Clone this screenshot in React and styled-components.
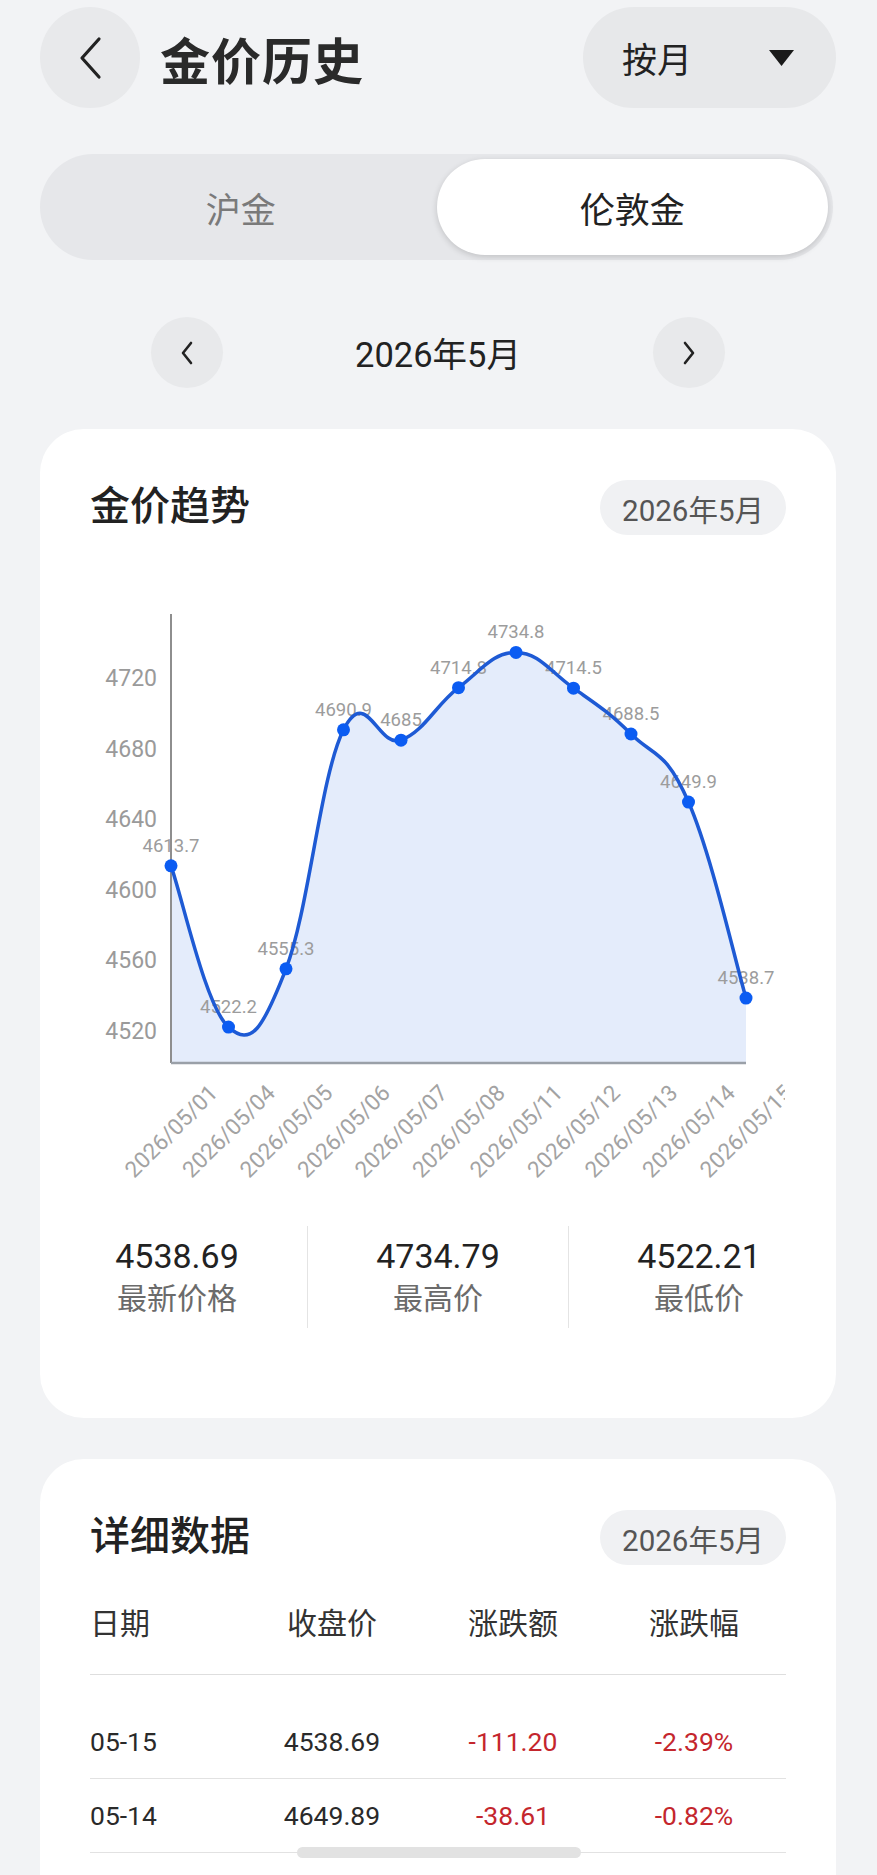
import React from 'react';
import styled, { createGlobalStyle } from 'styled-components';

const GlobalStyle = createGlobalStyle`
  html, body { margin: 0; padding: 0; background: #f2f3f5; }
  body {
    font-family: Roboto, "Noto Sans CJK SC", sans-serif;
    color: #222;
    -webkit-font-smoothing: antialiased;
  }
`;

const Page = styled.div`
  display: flex;
  flex-direction: column;
  padding: 7px 41px 160px 40px;
`;

const Header = styled.header`
  display: flex;
  align-items: center;
  height: 101px;
`;

const BackButton = styled.div`
  width: 100px;
  height: 101px;
  border-radius: 50%;
  background: #e8e9eb;
  display: flex;
  align-items: center;
  justify-content: center;
  flex-shrink: 0;
`;

const Title = styled.h1`
  margin: 0 0 0 20px;
  font-size: 50px;
  font-weight: 700;
  color: #2a2a2a;
  flex: 1;
  letter-spacing: 1px;
`;

const Dropdown = styled.div`
  width: 253px;
  height: 101px;
  box-sizing: border-box;
  border-radius: 51px;
  background: #e7e8ea;
  display: flex;
  align-items: center;
  justify-content: space-between;
  padding: 0 42px 0 39px;
  font-size: 35px;
  color: #222;
`;

const Segmented = styled.div`
  margin: 46px 3px 0 0;
  height: 106px;
  box-sizing: border-box;
  padding: 5px;
  border-radius: 53px;
  background: #e6e7ea;
  display: flex;
`;

const Segment = styled.div`
  flex: 1;
  border-radius: 48px;
  display: flex;
  align-items: center;
  justify-content: center;
  font-size: 35px;
  color: ${(p) => (p.$active ? '#222' : '#7a7a7a')};
  background: ${(p) => (p.$active ? '#fff' : 'transparent')};
  box-shadow: ${(p) => (p.$active ? '0 2px 6px rgba(0,0,0,0.16)' : 'none')};
`;

const MonthNav = styled.div`
  margin-top: 57px;
  display: flex;
  align-items: center;
  justify-content: center;
`;

const NavCircle = styled.div`
  width: 72px;
  height: 71px;
  border-radius: 50%;
  background: #e8e9eb;
  display: flex;
  align-items: center;
  justify-content: center;
`;

const MonthLabel = styled.div`
  width: 430px;
  text-align: center;
  font-size: 34.5px;
  color: #222;
  margin-bottom: 2px;
`;

const Card = styled.section`
  margin-top: 41px;
  background: #fff;
  border-radius: 44px;
  padding: 51px 50px ${(p) => p.$pb}px 50px;
  display: flex;
  flex-direction: column;
`;

const CardHeader = styled.div`
  display: flex;
  align-items: center;
  justify-content: space-between;
  height: 55px;
`;

const CardTitle = styled.h2`
  margin: 0 0 9px 0;
  font-size: 40px;
  font-weight: 500;
  color: #222;
`;

const Badge = styled.div`
  height: 55px;
  padding: 0 22px;
  border-radius: 28px;
  background: #f0f1f3;
  display: flex;
  align-items: center;
  font-size: 29.5px;
  color: #555;
`;

const ChartSvg = styled.svg`
  display: block;
  margin-top: 26px;
  overflow: hidden;
`;

const Stats = styled.div`
  margin: 45px -43px 0 -43px;
  display: flex;
  height: 102px;
`;

const StatItem = styled.div`
  flex: 1;
  display: flex;
  flex-direction: column;
  align-items: center;
  justify-content: center;
  border-left: ${(p) => (p.$first ? 'none' : '1px solid #e4e4e4')};
`;

const StatValue = styled.div`
  font-size: 34px;
  line-height: 40px;
  color: #222;
`;

const StatLabel = styled.div`
  margin-top: 3px;
  font-size: 30px;
  line-height: 40px;
  color: #6b6b6b;
`;

const cols = '151px 182px 180px 182px';

const TableHead = styled.div`
  margin-top: 39px;
  display: grid;
  grid-template-columns: ${cols};
  padding-bottom: 30px;
  border-bottom: 1.5px solid #dedede;
  font-size: 30px;
  line-height: 40px;
  color: #333;
`;

const TableBody = styled.div`
  margin-top: 30px;
`;

const Row = styled.div`
  display: grid;
  grid-template-columns: ${cols};
  height: 73px;
  align-items: center;
  border-bottom: 1.5px solid #e2e2e2;
  font-size: 26.5px;
  color: #2a2a2a;
`;

const Cell = styled.div`
  text-align: ${(p) => (p.$left ? 'left' : 'center')};
  color: ${(p) => (p.$tone === 'down' ? '#c4262d' : p.$tone === 'up' ? '#1f9d55' : 'inherit')};
`;

const HomeIndicator = styled.div`
  position: fixed;
  bottom: 17px;
  left: 50%;
  transform: translateX(-50%);
  width: 284px;
  height: 11px;
  border-radius: 6px;
  background: #e2e2e2;
`;

const values = [4613.7, 4522.2, 4555.3, 4690.9, 4685, 4714.8, 4734.8, 4714.5, 4688.5, 4649.9, 4538.7];
const dates = ['01', '04', '05', '06', '07', '08', '11', '12', '13', '14', '15'].map((d) => `2026/05/${d}`);
const yTicks = [4520, 4560, 4600, 4640, 4680, 4720];

const X0 = 81;
const STEP = 57.5;
const AXIS_BOTTOM = 502;
const px = (i) => X0 + i * STEP;
const py = (v) => 470 - (v - 4520) * 1.7625;

function buildPath(pts) {
  const a = 0.2;
  const n = pts.length;
  let d = `M${pts[0][0]},${pts[0][1]}`;
  for (let i = 0; i < n - 1; i++) {
    const p = pts[i];
    const q = pts[i + 1];
    let c1;
    if (i === 0) c1 = [p[0] + (q[0] - p[0]) * a, p[1] + (q[1] - p[1]) * a];
    else c1 = [p[0] + (q[0] - pts[i - 1][0]) * a, p[1] + (q[1] - pts[i - 1][1]) * a];
    let c2;
    if (i + 1 === n - 1) c2 = [q[0] - (q[0] - p[0]) * a, q[1] - (q[1] - p[1]) * a];
    else c2 = [q[0] - (pts[i + 2][0] - p[0]) * a, q[1] - (pts[i + 2][1] - p[1]) * a];
    d += ` C${c1[0].toFixed(2)},${c1[1].toFixed(2)} ${c2[0].toFixed(2)},${c2[1].toFixed(2)} ${q[0]},${q[1].toFixed(2)}`;
  }
  return d;
}

function TrendChart() {
  const pts = values.map((v, i) => [px(i), py(v)]);
  const line = buildPath(pts);
  const area = `${line} L${px(values.length - 1)},${AXIS_BOTTOM} L${X0},${AXIS_BOTTOM} Z`;
  return (
    <ChartSvg width="695" height="620" viewBox="0 0 695 620">
      <path d={area} fill="#e4ecfb" />
      {yTicks.map((t) => (
        <text key={t} x="67" y={py(t)} textAnchor="end" dominantBaseline="central" fontSize="23" fill="#9a9a9a" fontFamily="Roboto, sans-serif">
          {t}
        </text>
      ))}
      <line x1={X0} y1="53" x2={X0} y2={AXIS_BOTTOM} stroke="#8e8e8e" strokeWidth="2" />
      <line x1={X0} y1={AXIS_BOTTOM} x2={px(10)} y2={AXIS_BOTTOM} stroke="#9aa0a8" strokeWidth="2.5" />
      {values.map((v, i) => (
        <text key={`l${i}`} x={px(i)} y={py(v) - 14} textAnchor="middle" fontSize="18.5" fill="#9c9c9c" fontFamily="Roboto, sans-serif">
          {String(v)}
        </text>
      ))}
      <path d={line} fill="none" stroke="#1e5ad4" strokeWidth="3.5" strokeLinejoin="round" />
      {pts.map((p, i) => (
        <circle key={`c${i}`} cx={p[0]} cy={p[1]} r="6.5" fill="#0b5cf2" />
      ))}
      {dates.map((d, i) => (
        <text
          key={d}
          x={px(i)}
          y="570"
          textAnchor="middle"
          dominantBaseline="central"
          fontSize="22.5"
          fill="#a3a3a3"
          fontFamily="Roboto, sans-serif"
          transform={`rotate(-45 ${px(i)} 570)`}
        >
          {d}
        </text>
      ))}
    </ChartSvg>
  );
}

const rows = [
  ['05-15', '4538.69', '-111.20', '-2.39%'],
  ['05-14', '4649.89', '-38.61', '-0.82%'],
];

export default function App() {
  return (
    <>
      <GlobalStyle />
      <Page>
        <Header>
          <BackButton>
            <svg width="26" height="44" viewBox="0 0 26 44">
              <path d="M22 3 L5 22 L22 41" fill="none" stroke="#222" strokeWidth="3.2" strokeLinecap="round" strokeLinejoin="round" />
            </svg>
          </BackButton>
          <Title>金价历史</Title>
          <Dropdown>
            <span>按月</span>
            <svg width="25" height="18" viewBox="0 0 25 18">
              <polygon points="0,1 25,1 12.5,17" fill="#1a1a1a" />
            </svg>
          </Dropdown>
        </Header>

        <Segmented>
          <Segment>沪金</Segment>
          <Segment $active>伦敦金</Segment>
        </Segmented>

        <MonthNav>
          <NavCircle>
            <svg width="14" height="24" viewBox="0 0 14 24">
              <path d="M11 2 L3 12 L11 22" fill="none" stroke="#222" strokeWidth="2.6" strokeLinecap="round" strokeLinejoin="round" />
            </svg>
          </NavCircle>
          <MonthLabel>2026年5月</MonthLabel>
          <NavCircle>
            <svg width="14" height="24" viewBox="0 0 14 24">
              <path d="M3 2 L11 12 L3 22" fill="none" stroke="#222" strokeWidth="2.6" strokeLinecap="round" strokeLinejoin="round" />
            </svg>
          </NavCircle>
        </MonthNav>

        <Card $pb={90}>
          <CardHeader>
            <CardTitle>金价趋势</CardTitle>
            <Badge>2026年5月</Badge>
          </CardHeader>
          <TrendChart />
          <Stats>
            <StatItem $first>
              <StatValue>4538.69</StatValue>
              <StatLabel>最新价格</StatLabel>
            </StatItem>
            <StatItem>
              <StatValue>4734.79</StatValue>
              <StatLabel>最高价</StatLabel>
            </StatItem>
            <StatItem>
              <StatValue>4522.21</StatValue>
              <StatLabel>最低价</StatLabel>
            </StatItem>
          </Stats>
        </Card>

        <Card $pb={120}>
          <CardHeader>
            <CardTitle>详细数据</CardTitle>
            <Badge>2026年5月</Badge>
          </CardHeader>
          <TableHead>
            <Cell $left>日期</Cell>
            <Cell>收盘价</Cell>
            <Cell>涨跌额</Cell>
            <Cell>涨跌幅</Cell>
          </TableHead>
          <TableBody>
            {rows.map((r) => (
              <Row key={r[0]}>
                <Cell $left>{r[0]}</Cell>
                <Cell>{r[1]}</Cell>
                <Cell $tone="down">{r[2]}</Cell>
                <Cell $tone="down">{r[3]}</Cell>
              </Row>
            ))}
          </TableBody>
        </Card>
      </Page>
      <HomeIndicator />
    </>
  );
}
